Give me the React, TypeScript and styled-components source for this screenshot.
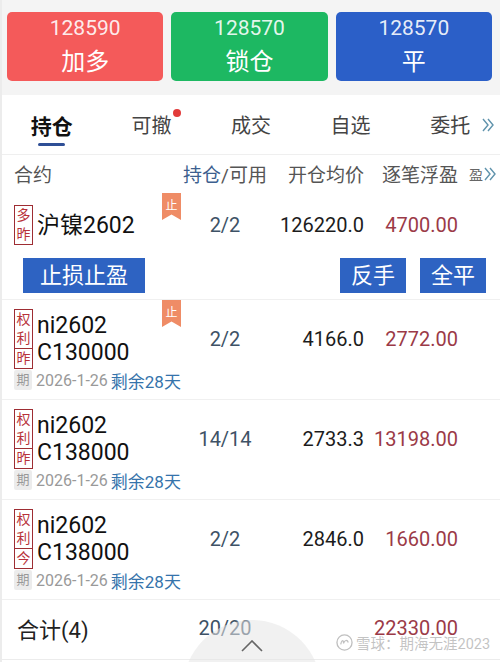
import * as React from 'react';

import styled, { createGlobalStyle } from 'styled-components';

const GlobalStyle = createGlobalStyle`
	html, body {
		margin: 0;
		padding: 0;
		background: #ffffff;
	}
	body {
		font-family: Roboto, 'Noto Sans CJK SC', sans-serif;
		color: #222;
	}
`;

const Page = styled.div`
	width: 500px;
	height: 662px;
	overflow: hidden;
	position: relative;
	box-sizing: border-box;
	border-left: 2px solid #ececec;
	background: #fff;
`;

// 상단 주문 버튼
const OrderBar = styled.div`
	height: 95px;
	box-sizing: border-box;
	padding: 12px 8px 0 5px;
	background: #f4f4f4;
	display: grid;
	grid-template-columns: repeat(3, 1fr);
	column-gap: 8px;
	align-items: start;
`;

const OrderButton = styled.div<{ $bg: string }>`
	height: 69px;
	border-radius: 5px;
	background: ${(p) => p.$bg};
	display: flex;
	flex-direction: column;
	align-items: center;
	justify-content: center;
	color: #fff;
`;

const OrderPrice = styled.div`
	font-size: 21px;
	line-height: 24px;
	color: rgba(255, 255, 255, 0.9);
`;

const OrderLabel = styled.div`
	font-size: 24px;
	line-height: 30px;
	margin-top: 7px;
`;

// 탭
const Tabs = styled.div`
	height: 60px;
	display: flex;
	position: relative;
	border-bottom: 1px solid #efefef;
	box-sizing: border-box;
`;

const Tab = styled.div<{ $active?: boolean }>`
	width: 100px;
	display: flex;
	justify-content: center;
	align-items: center;
	position: relative;
	font-size: ${(p) => (p.$active ? '21px' : '20px')};
	font-weight: ${(p) => (p.$active ? 700 : 400)};
	color: ${(p) => (p.$active ? '#111' : '#444')};
	&::after {
		content: '';
		display: ${(p) => (p.$active ? 'block' : 'none')};
		position: absolute;
		left: 36px;
		width: 27px;
		bottom: 8px;
		height: 3px;
		border-radius: 2px;
		background: #2f4f96;
	}
`;

const TabText = styled.span`
	position: relative;
`;

const RedDot = styled.span`
	position: absolute;
	right: -10px;
	top: -1px;
	width: 8px;
	height: 8px;
	border-radius: 50%;
	background: #e23b3b;
`;

const MoreArrow = styled.div`
	position: absolute;
	right: 0;
	top: 0;
	bottom: 0;
	width: 18px;
	display: flex;
	align-items: center;
	background: #fff;
`;

const Chevrons = () => (
	<svg width="12" height="16" viewBox="0 0 12 16">
		<polyline points="1,2 6,8 1,14" fill="none" stroke="#5f93ac" strokeWidth="1.4" />
		<polyline points="6,2 11,8 6,14" fill="none" stroke="#5f93ac" strokeWidth="1.4" />
	</svg>
);

// 표 공통 그리드
const Columns = styled.div`
	display: grid;
	grid-template-columns: 166px 90px 94px 94px 1fr;
	padding-left: 12px;
	align-items: center;
`;

const HeaderRow = styled(Columns)`
	height: 37px;
	font-size: 19px;
	color: #555;
	position: relative;
`;

const HeadCell = styled.div<{ $align?: string }>`
	text-align: ${(p) => p.$align || 'left'};
	white-space: nowrap;
`;

const HeadStrong = styled.span`
	color: #3d5f8f;
`;

const HeadMore = styled.div`
	display: flex;
	align-items: center;
	padding-left: 11px;
	gap: 1px;
`;

const SmallText = styled.span`
	font-size: 14px;
	color: #666;
`;

// 포지션 행
const PositionRow = styled.div<{ $first?: boolean }>`
	position: relative;
	box-sizing: border-box;
	height: ${(p) => (p.$first ? '108px' : '100px')};
	padding-top: ${(p) => (p.$first ? '0' : '9px')};
	border-bottom: 1px solid #f0f0f0;
`;

const MainLine = styled(Columns)<{ $height: number }>`
	height: ${(p) => p.$height}px;
`;

const NameCell = styled.div`
	display: flex;
	align-items: center;
	gap: 4px;
`;

const TagBox = styled.div`
	width: 17px;
	border: 1px solid #9e2d33;
	display: flex;
	flex-direction: column;
	align-items: center;
	color: #b8323a;
	font-size: 14px;
	line-height: 19px;
	flex-shrink: 0;
`;

const TagPart = styled.div<{ $divided?: boolean }>`
	width: 100%;
	text-align: center;
	border-top: ${(p) => (p.$divided ? '1px solid #9e2d33' : 'none')};
`;

const NameText = styled.div`
	font-size: 23px;
	line-height: 27px;
	color: #111;
`;

const QtyCell = styled.div`
	text-align: center;
	font-size: 20px;
	color: #3e5266;
`;

const PriceCell = styled.div`
	text-align: right;
	font-size: 20px;
	color: #1c1c1c;
`;

const ProfitCell = styled.div`
	text-align: right;
	font-size: 20px;
	color: #9b3a47;
`;

const StopRibbon = styled.div<{ $top: number }>`
	position: absolute;
	left: 160px;
	top: ${(p) => p.$top}px;
	width: 19px;
	height: 27px;
	background: #ef8c66;
	color: #fff;
	font-size: 12px;
	display: flex;
	justify-content: center;
	padding-top: 3px;
	box-sizing: border-box;
	clip-path: polygon(0 0, 100% 0, 100% 100%, 50% 80%, 0 100%);
`;

const ActionBar = styled.div`
	display: flex;
	justify-content: space-between;
	padding: 0 14px 0 21px;
`;

const ActionGroup = styled.div`
	display: flex;
	gap: 14px;
`;

const ActionButton = styled.button<{ $wide?: boolean }>`
	height: 35px;
	padding: 0 ${(p) => (p.$wide ? '17px' : '11px')};
	border: none;
	border-radius: 0;
	background: #2e63c2;
	color: #fff;
	font-family: inherit;
	font-size: 22px;
	line-height: 35px;
	cursor: pointer;
`;

const ExpiryLine = styled.div`
	display: flex;
	align-items: center;
	height: 22px;
	margin-top: 2px;
	padding-left: 12px;
	font-size: 16px;
	white-space: nowrap;
`;

const ExpiryBadge = styled.span`
	display: inline-block;
	width: 18px;
	height: 20px;
	line-height: 20px;
	text-align: center;
	background: #ececec;
	color: #999;
	font-size: 13px;
	border-radius: 2px;
	margin-right: 4px;
`;

const ExpiryDate = styled.span`
	color: #999;
	margin-right: 3px;
`;

const DaysLeft = styled.span`
	color: #3573ab;
	font-size: 17px;
`;

// 합계
const TotalRow = styled(Columns)`
	height: 60px;
	border-bottom: 1px solid #ececec;
	box-sizing: border-box;
	position: relative;
	padding-bottom: 3px;
`;

const TotalLabel = styled.div`
	font-size: 22px;
	color: #222;
	padding-left: 3px;
`;

const ScrollTop = styled.div`
	position: absolute;
	left: 181px;
	top: 620px;
	width: 138px;
	height: 138px;
	border-radius: 50%;
	background: rgba(230, 230, 230, 0.55);
	display: flex;
	justify-content: center;
	padding-top: 20px;
	box-sizing: border-box;
`;

const Watermark = styled.div`
	position: absolute;
	left: 334px;
	top: 632px;
	display: flex;
	align-items: center;
	gap: 3px;
	font-size: 14.5px;
	color: rgba(175, 175, 175, 0.75);
	white-space: nowrap;
`;

type OptionPos = {
	kind: string;
	day: string;
	code: string;
	strike: string;
	qty: string;
	price: string;
	profit: string;
	stop?: boolean;
};

const options: OptionPos[] = [
	{ kind: '权利', day: '昨', code: 'ni2602', strike: 'C130000', qty: '2/2', price: '4166.0', profit: '2772.00', stop: true },
	{ kind: '权利', day: '昨', code: 'ni2602', strike: 'C138000', qty: '14/14', price: '2733.3', profit: '13198.00' },
	{ kind: '权利', day: '今', code: 'ni2602', strike: 'C138000', qty: '2/2', price: '2846.0', profit: '1660.00' },
];

const App = () => {
	return (
		<Page>
			<GlobalStyle />
			{/* 주문 버튼 */}
			<OrderBar>
				<OrderButton $bg="#f45a5a">
					<OrderPrice>128590</OrderPrice>
					<OrderLabel>加多</OrderLabel>
				</OrderButton>
				<OrderButton $bg="#1db862">
					<OrderPrice>128570</OrderPrice>
					<OrderLabel>锁仓</OrderLabel>
				</OrderButton>
				<OrderButton $bg="#2b5fc8">
					<OrderPrice>128570</OrderPrice>
					<OrderLabel>平</OrderLabel>
				</OrderButton>
			</OrderBar>

			<Tabs>
				<Tab $active>持仓</Tab>
				<Tab>
					<TabText>
						可撤
						<RedDot />
					</TabText>
				</Tab>
				<Tab>成交</Tab>
				<Tab>自选</Tab>
				<Tab>委托</Tab>
				<MoreArrow>
					<Chevrons />
				</MoreArrow>
			</Tabs>

			<HeaderRow>
				<HeadCell>合约</HeadCell>
				<HeadCell $align="center">
					<HeadStrong>持仓</HeadStrong>/可用
				</HeadCell>
				<HeadCell $align="right">开仓均价</HeadCell>
				<HeadCell $align="right">逐笔浮盈</HeadCell>
				<HeadMore>
					<SmallText>盈</SmallText>
					<Chevrons />
				</HeadMore>
			</HeaderRow>

			{/* 선물 포지션 */}
			<PositionRow $first>
				<MainLine $height={66}>
					<NameCell>
						<TagBox>
							<TagPart>多</TagPart>
							<TagPart>昨</TagPart>
						</TagBox>
						<NameText>沪镍2602</NameText>
					</NameCell>
					<QtyCell>2/2</QtyCell>
					<PriceCell>126220.0</PriceCell>
					<ProfitCell>4700.00</ProfitCell>
				</MainLine>
				<StopRibbon $top={1}>止</StopRibbon>
				<ActionBar>
					<ActionButton $wide>止损止盈</ActionButton>
					<ActionGroup>
						<ActionButton>反手</ActionButton>
						<ActionButton>全平</ActionButton>
					</ActionGroup>
				</ActionBar>
			</PositionRow>

			{/* 옵션 포지션 */}
			{options.map((o, i) => (
				<PositionRow key={i}>
					<MainLine $height={58}>
						<NameCell>
							<TagBox>
								<TagPart>{o.kind[0]}</TagPart>
								<TagPart>{o.kind[1]}</TagPart>
								<TagPart $divided>{o.day}</TagPart>
							</TagBox>
							<div>
								<NameText>{o.code}</NameText>
								<NameText>{o.strike}</NameText>
							</div>
						</NameCell>
						<QtyCell>{o.qty}</QtyCell>
						<PriceCell>{o.price}</PriceCell>
						<ProfitCell>{o.profit}</ProfitCell>
					</MainLine>
					{o.stop && <StopRibbon $top={0}>止</StopRibbon>}
					<ExpiryLine>
						<ExpiryBadge>期</ExpiryBadge>
						<ExpiryDate>2026-1-26</ExpiryDate>
						<DaysLeft>剩余28天</DaysLeft>
					</ExpiryLine>
				</PositionRow>
			))}

			<TotalRow>
				<TotalLabel>合计(4)</TotalLabel>
				<QtyCell>20/20</QtyCell>
				<div />
				<ProfitCell>22330.00</ProfitCell>
			</TotalRow>

			<ScrollTop>
				<svg width="22" height="12" viewBox="0 0 22 12">
					<polyline points="1,11 11,1 21,11" fill="none" stroke="#666" strokeWidth="1.6" />
				</svg>
			</ScrollTop>

			<Watermark>
				<svg width="17" height="17" viewBox="0 0 18 18">
					<circle cx="9" cy="9" r="8" fill="none" stroke="rgba(175,175,175,0.8)" strokeWidth="1.4" />
					<path d="M5 11 C6 6, 8 6, 8 10 C9 6, 12 6, 13 9" fill="none" stroke="rgba(175,175,175,0.8)" strokeWidth="1.3" />
				</svg>
				<span>雪球：期海无涯2023</span>
			</Watermark>
		</Page>
	);
};

export default App;
